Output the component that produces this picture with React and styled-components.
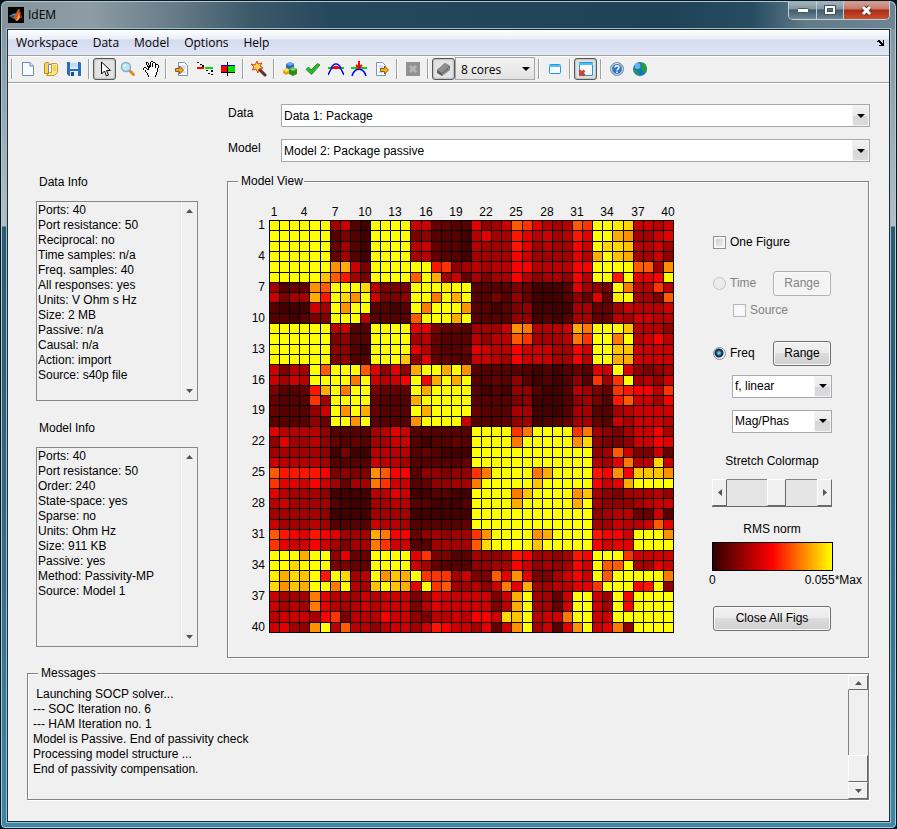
import React from "react";
import styled, { createGlobalStyle, css } from "styled-components";

const UI = '"Liberation Sans", Arial, sans-serif';
const MENU = '"Open Sans", "Noto Sans", sans-serif';

const GlobalStyle = createGlobalStyle`
  * { box-sizing: border-box; }
  body { margin: 0; background: #06131b; font: 12px/15px ${UI}; color: #000; }
  button, select, input { font: inherit; color: inherit; margin: 0; }
`;

/* ---------- window frame ---------- */

const Window = styled.div`
  min-height: 100vh;
  display: flex;
  flex-direction: column;
  border: 1px solid #0a1820;
  border-radius: 7px 7px 5px 5px;
  padding: 0 5px 5px;
  box-shadow: inset 0 0 0 1px #b4c8d2;
  background:
    linear-gradient(90deg, #84949d 0, #8d9ca5 90px, #637985 180px, #3c596a 250px, #26485d 330px, #1f4257 75%, #274d62 84%, #617b89 90%, #6d8594 100%) top / 100% 28px no-repeat,
    linear-gradient(180deg, #7d919d 0, #b3bfc7 225px, #2b5a74 226px, #2c6784 480px, #3c88a8 100%);
`;

const TitleBar = styled.header`
  display: flex;
  justify-content: space-between;
  height: 27px;
  padding: 0 1px 0 2px;
`;

const TitleText = styled.h1`
  display: flex;
  align-items: center;
  gap: 4px;
  margin: 0;
  padding-top: 1px;
  font: 12px/16px ${MENU};
`;

const WindowButtons = styled.div`
  display: flex;
  height: 19px;
  border: 1px solid #c3d0d7;
  border-top: 0;
  border-radius: 0 0 5px 5px;
  overflow: hidden;
`;

const WindowButton = styled.button`
  display: grid;
  place-items: center;
  width: ${(p) => (p.$close ? 46 : 27)}px;
  padding: 0;
  border: 0;
  border-left: ${(p) => (p.$first ? "0" : "1px solid #c3d0d7")};
  background: ${(p) =>
    p.$close
      ? "linear-gradient(#d19a8f 0 2px, #c6786b 8px, #ab2b16 9px, #c8502f)"
      : "linear-gradient(#9fb0ba 0 2px, #8094a0 8px, #3f5a69 9px, #6d8795)"};
`;

const Client = styled.div`
  flex: 1;
  display: flex;
  flex-direction: column;
  border: 1px solid #17303d;
  outline: 1px solid #a7bac4;
  margin: 1px;
  background: #f0f0f0;
`;

/* ---------- menu and toolbar ---------- */

const MenuBar = styled.nav`
  display: flex;
  align-items: center;
  height: 26px;
  padding: 0 4px 0 8px;
  border-bottom: 1px solid #a0a0a0;
  background: linear-gradient(#fff, #e9eef7 9px, #d4dbed 10px, #e0e6f6);
  font: 12px/16px ${MENU};
`;

const MenuItem = styled.button`
  padding: 0;
  margin-right: 15px;
  border: 0;
  background: none;
`;

const DockButton = styled.button`
  display: grid;
  padding: 0;
  margin-left: auto;
  border: 0;
  background: none;
`;

const Toolbar = styled.div`
  display: flex;
  align-items: center;
  height: 27px;
  padding-bottom: 2px;
  border-top: 1px solid #fff;
  border-bottom: 1px solid #a0a0a0;
  box-shadow: 0 1px #fff;
`;

const Separator = styled.span`
  width: 8px;
  height: 20px;
  background: linear-gradient(90deg, transparent 3px, #a0a0a0 3px 4px, #fff 4px 5px, transparent 5px);
`;

const ToolButton = styled.button`
  display: grid;
  place-items: center;
  width: 23px;
  height: 22px;
  padding: 0;
  border: 1px solid transparent;
  border-radius: 3px;
  background: none;
  ${(p) =>
    p.$pressed &&
    css`
      border-color: #575757;
      background: #e3e3e3;
      box-shadow: inset 0 0 2px #777;
    `}
`;

/* ---------- drop-downs ---------- */

const SelectFrame = styled.span`
  display: grid;
  grid-template-columns: 1fr 17px;
  align-items: stretch;
  width: ${(p) => p.$width || "auto"};
  height: 23px;
  border: 1px solid #a5a8b0;
  background: ${(p) => (p.$tool ? "linear-gradient(#f3f3f3, #e2e2e2)" : "#fff")};
  font-family: ${(p) => (p.$tool ? MENU : UI)};
`;

const SelectBox = styled.select`
  grid-area: 1 / 1 / 2 / 3;
  width: 100%;
  min-width: 0;
  padding: 1px 18px 0 ${(p) => (p.$tool ? 5 : 2)}px;
  border: 0;
  border-radius: 0;
  appearance: none;
  background: none;
`;

const SelectArrow = styled.span`
  grid-area: 1 / 2 / 2 / 3;
  display: grid;
  place-items: center;
  pointer-events: none;
  border: 1px solid ${(p) => (p.$tool ? "transparent" : "#f4f4f4")};
  background: ${(p) => (p.$tool ? "none" : "linear-gradient(#f1f1f1, #e9e9e9 50%, #d6d6d6 50%, #dcdcdc)")};
`;

function Select({ id, label, value, width, tool }) {
  return (
    <SelectFrame $width={width} $tool={tool}>
      <SelectBox id={id} aria-label={label} defaultValue={value} $tool={tool}>
        <option>{value}</option>
      </SelectBox>
      <SelectArrow $tool={tool}>
        <svg width="8" height="4" viewBox="0 0 8 4"><path d="M0 0h8L4 4z" /></svg>
      </SelectArrow>
    </SelectFrame>
  );
}

/* ---------- body ---------- */

const Body = styled.main`
  flex: 1;
  padding: 21px 19px 20px;
`;

const Columns = styled.div`
  display: grid;
  grid-template-columns: 162px 1fr;
  gap: 29px;
  margin-left: 9px;
`;

const Sidebar = styled.div`
  padding-top: 70px;
`;

const InfoSection = styled.section`
  margin-bottom: 19px;
`;

const InfoTitle = styled.h2`
  margin: 0 0 11px 3px;
  font: 12px/16px ${UI};
`;

const InfoBox = styled.div`
  display: flex;
  justify-content: space-between;
  height: 200px;
  border: 1px solid #828790;
`;

const InfoList = styled.ul`
  margin: 0;
  padding: 1px;
  list-style: none;
`;

const PlainScroll = styled.div`
  display: flex;
  flex-direction: column;
  justify-content: space-between;
  align-items: center;
  width: 16px;
  padding: 6px 0;
  border-left: 1px solid #fafafa;
  box-shadow: -1px 0 #e7e7e7;
`;

const MainColumn = styled.div`
  display: flex;
  flex-direction: column;
`;

const Field = styled.div`
  display: grid;
  grid-template-columns: 54px 1fr;
  margin-bottom: 12px;
`;

const FieldLabel = styled.label`
  padding-left: 1px;
  line-height: 18px;
`;

const Group = styled.fieldset`
  min-width: 0;
  margin: 0 1px 0 0;
  padding: 0;
  border: 1px solid #828282;
  box-shadow: 1px 1px #fff, inset 1px 1px #fff;
`;

const Legend = styled.legend`
  height: 15px;
  margin-left: 10px;
  padding: 0 1px 0 3px;
  line-height: 15px;
  background: #f0f0f0;
`;

const ModelView = styled.div`
  display: flex;
  justify-content: space-between;
  align-items: flex-start;
  height: 468px;
  padding: 16px 6px 0 17px;
`;

const Controls = styled.div`
  width: 150px;
  padding-top: 13px;
`;

const ControlRow = styled.div`
  display: flex;
  align-items: center;
  height: 26px;
  margin: ${(p) => p.$top || 0}px 0 0 ${(p) => p.$indent || 0}px;
`;

const Choice = styled.label`
  display: flex;
  align-items: center;
  gap: 4px;
  width: ${(p) => p.$width || "auto"};
  padding-left: 1px;
  color: ${(p) => (p.$off ? "#838383" : "#000")};
`;

const CheckInput = styled.input`
  appearance: none;
  width: 13px;
  height: 13px;
  border: 1px solid ${(p) => (p.disabled ? "#b8b8b8" : "#8e8f8f")};
  background: linear-gradient(135deg, #c3c7cb, #f6f6f6);
  box-shadow: inset 0 0 0 2px #f6f6f6;
  ${(p) => p.disabled && css`background: #f9f9f9;`}
`;

const RadioInput = styled.input`
  appearance: none;
  width: 13px;
  height: 13px;
  border: 1px solid ${(p) => (p.disabled ? "#c2c2c2" : "#8e8f8f")};
  border-radius: 50%;
  background: #ececec;
  &:checked {
    background: radial-gradient(circle at 5px 5px, #8fdcf8 0, #2f86b5 2px, #0d3350 3px, #0d3350 4px, #f4f4f4 5px);
  }
`;

const PushButton = styled.button`
  width: ${(p) => (p.$wide ? 118 : 58)}px;
  height: 25px;
  margin-left: ${(p) => (p.$wide ? 1 : 0)}px;
  padding: 0;
  border: 1px solid #707070;
  border-radius: 3px;
  background: linear-gradient(#f2f2f2, #ebebeb 48%, #dcdcdc 50%, #cfcfcf);
  box-shadow: inset 0 0 0 1px #f8f8f8;
  font-size: 12px;
  &:disabled {
    border-color: #adb2b5;
    background: #f4f4f4;
    color: #838383;
  }
`;

const Caption = styled.div`
  width: 120px;
  margin-top: ${(p) => p.$top}px;
  line-height: 16px;
  text-align: center;
  white-space: nowrap;
`;

const Slider = styled.div`
  display: grid;
  grid-template-columns: 15px 40px 19px 1fr 15px;
  width: 120px;
  height: 28px;
  margin-top: 10px;
  border-bottom: 1px solid #696969;
`;

const SliderTrack = styled.span`
  border-top: 1px solid #828282;
  background: #e5e5e5;
`;

const RaisedButton = styled.button`
  display: grid;
  place-items: center;
  min-width: 0;
  padding: 0;
  border: 1px solid;
  border-color: #fff #696969 #696969 #fff;
  background: #f0f0f0;
`;

const ColorBar = styled.div`
  width: 121px;
  height: 29px;
  margin-top: 5px;
  border: 1px solid #000;
  background: linear-gradient(90deg, #300000, #ff0000 50%, #ffff00);
`;

const BarLabels = styled.div`
  display: flex;
  justify-content: space-between;
  margin: 2px 0 18px -3px;
  line-height: 15px;
`;

const Messages = styled.div`
  display: flex;
  justify-content: space-between;
  height: 118px;
`;

const Log = styled.div`
  padding: 6px 5px;
  white-space: pre;
`;

const MessageScroll = styled.div`
  display: grid;
  grid-template-rows: 15px 1fr 27px 17px;
  width: 20px;
  margin-top: -6px;
`;

const MessageTrack = styled.span`
  border-left: 1px solid #828282;
`;

/* ---------- heat map ---------- */

const PALETTE = {
  0: "#440000", 1: "#560000", 2: "#660000", 3: "#7b0000", 4: "#900000",
  5: "#a40000", 6: "#b80000", 7: "#cc0000", 8: "#e40000", 9: "#fb0000",
  a: "#ff1400", b: "#ff3300", c: "#ff5a00", d: "#ff7800", e: "#ff9000",
  f: "#ffac00", g: "#ffc400", h: "#ffd800", i: "#ffee00", y: "#ffff00",
};

const ROWS = [
  "yyyyyy5710yyyy7722118457cb8656cbyyih7767",
  "yyyyyy1310yyyy3411106855a86756a8yyfe5578",
  "yyyyyy2510yyyy6721106555a8565597yhhg6675",
  "yyyyyy2510yyyy562110555597555586fygf5574",
  "yyyyyyef73yyyyyyab45656699666699yyyycc5e",
  "yyyyygca53yyyycyf572535596455496yyay889y",
  "5122ecyyyh6333yyyiyy11113200018543yd66b6",
  "7355fayhey7334yydyfy11314200014282iy553c",
  "100075yeyy1101ydyyye11013400005522576667",
  "110133yyy61111cyyyfy11114401015522657766",
  "yyyyyy6711yyyy8832215557ed6667fdyyyg6664",
  "yyyyyy3411yyyy5621116466cb5556dbyydy6796",
  "yyyyyy4410yyyy862112876697775597yygg7777",
  "yyyyyy3411yyyg482211776597775596yyff7777",
  "7365ycyyyc8484fyyfye11111101012187y84345",
  "7576yyyydy7679y9fyfy112141010141b5by5647",
  "3112afydyy3222yfyyyy10104410016532ba996b",
  "2111b5yyyy2111fyyyyy11113400014531ac7759",
  "211147yeyf2111yfyyyy21115500015511567777",
  "111142yyey1111eyyyy711124501125521757776",
  "86666411115687111111yyyybdyyyybd54357795",
  "48556421215577101121yyyydyyyyyeh43347798",
  "55555403006666121000yyyyyyyyyyyy45c73372",
  "76666511117665111112yyyyyyyyyyyy658d66h7",
  "caaaa93433ec99144344bdyyyydfyyyya9e9ggge",
  "b887975255db77124455dyyyyygyyyyy978fyyyy",
  "86555400006687001100yyyydgyyyyeg54355564",
  "67555510005566110001yyyyfyyyyyfy54445677",
  "55555400005555000000yyyyyyyyyyyy45662271",
  "75556511117665111112yyyyyyyyyyyy557667c8",
  "ca98a98555fd99245455beyyyyefyyyya997yyye",
  "b877975355db77115555chyyyygyyyyy9788yyyy",
  "yyyfyy4822yyyy8b33115445a95545a9yyyb7777",
  "yyhyyy3322yyyy752111445597454597yccy5587",
  "ifhgyayh56yegfybbb5733c8e8335797ycyyyyyd",
  "hegfyydy65gygf8ybc55647d8f556688byyy9ay4",
  "7555d8665767773587777737fy5527yy75y9yyyy",
  "7565d8656767773687777736fy5527yy75y9yyyy",
  "677759b3666977436676997hgy677dyy77yyyyyy",
  "7854ey6c66467757a9775827ey5718ey78d4yyyy",
];

const TICKS = Array.from({ length: 14 }, (_, i) => 1 + 3 * i);
const colX = (i) => 24 + Math.round(i * 10.1);
const rowY = (i) => 15 + Math.round(i * 10.3);

function HeatMap() {
  return (
    <svg width="435" height="430" viewBox="0 0 435 430" role="img" aria-label="Model View">
      <rect x="24" y="15" width="405" height="413" />
      <g shapeRendering="crispEdges">
        {ROWS.map((row, r) =>
          [...row].map((level, c) => (
            <rect
              key={`${r}-${c}`}
              x={colX(c) + 1}
              y={rowY(r) + 1}
              width={colX(c + 1) - colX(c) - 1}
              height={rowY(r + 1) - rowY(r) - 1}
              fill={PALETTE[level]}
            />
          ))
        )}
      </g>
      <g fontFamily={UI} fontSize="12">
        {TICKS.map((t) => (
          <text key={`x${t}`} x={colX(t - 1) + 5} y="11" textAnchor="middle">{t}</text>
        ))}
        {TICKS.map((t) => (
          <text key={`y${t}`} x="20" y={rowY(t - 1) + 9} textAnchor="end">{t}</text>
        ))}
      </g>
    </svg>
  );
}

/* ---------- icons ---------- */

const Icon = ({ children, crisp }) => (
  <svg width="16" height="16" viewBox="0 0 16 16" fill="none" shapeRendering={crisp ? "crispEdges" : undefined}>
    {children}
  </svg>
);

const MatlabLogo = () => (
  <svg width="16" height="16" viewBox="0 0 16 16">
    <path fill="#000" d="M0 0h16v16H0z" />
    <path fill="#4a9ac8" d="M1 9l4-2 2-1 2 2-3 4z" />
    <path fill="#1f5573" d="M1 9l3 2 2 0 2-3z" />
    <path fill="#d9541e" d="M5 11c3-2 4-9 6-9 1 1 2 7 4 10-2-2-3-1-4 0-1 1-2 2-3 2-1-1-1-3-3-3z" />
    <path fill="#f6b04a" d="M11 2c0 4 0 7-3 12 2 0 3-2 4-4 0-3 0-6-1-8z" />
    <path fill="#8c1d0e" d="M11 2c1 1 2 7 4 10-2-2-2-1-3-1z" />
  </svg>
);

const NewIcon = () => (
  <Icon><path d="M2.500 1.500h7.500l3.500 3.500v9.500h-11z" fill="#f8fbff" stroke="#7089b5" /><path d="M10 1.500V5h3.500" fill="#dbe6f5" stroke="#7089b5" /></Icon>
);
const OpenIcon = () => (
  <Icon>
    <path d="M1.500 2.500l1-1h3l1 1v10h-5z" fill="#f6d55c" stroke="#b98e18" />
    <path d="M5.500 3.500h5l2 2v8h-7z" fill="#fff" stroke="#7089b5" />
    <path d="M8.500 2.500h5l1 1v8l-3 3h-8l3-3h2z" fill="#fce887" stroke="#c49a22" />
    <path d="M10 5h3M10 7h3M10 9h3" stroke="#e7c03f" />
  </Icon>
);
const SaveIcon = () => (
  <Icon>
    <path d="M1 1h13l1 1v13H3l-2-2z" fill="#2c6cc0" /><path d="M4 1h8v7H4z" fill="#d8ecfc" />
    <path d="M4 3h8M4 5h8" stroke="#a8cbe8" />
    <path d="M4 10h8v5H4z" fill="#e8eef4" /><path d="M5 11h3v4H5z" fill="#174f96" />
  </Icon>
);
const CursorIcon = () => (
  <Icon><path d="M4.500 1v12l3-3 2 5 2-1-2-4.500h4z" fill="#fff" stroke="#000" /></Icon>
);
const ZoomIcon = () => (
  <Icon>
    <path d="M9 9l4.500 4.500" stroke="#d88a2c" strokeWidth="3" strokeLinecap="round" />
    <circle cx="6" cy="6" r="4.500" fill="#bfe4fa" stroke="#7fb0d4" strokeWidth="1.500" />
    <path d="M4 6c0-1 1-2 2-2" stroke="#fff" strokeWidth="1.500" />
  </Icon>
);
const HandIcon = () => (
  <Icon crisp>
    <path d="M5 15v-2L1 9V7h2l2 2V7L3 4V2h2l2 4V1h2v5l1-5h2v6l2-3h1v2l-1 4-2 3v2z" fill="#fff" />
    <path d="M5 14h1v2H5zM12 14h1v2h-1zM4 12h1v2H4zM3 11h1v1H3zM2 9h1v2H2zM0 7h1v2H0zM1 6h2v1H1zM3 7h1v1H3zM4 8h1v1H4zM5 5h1v4H5zM4 4h1v2H4zM3 2h1v2H3zM3 1h2v1H3zM5 2h1v2H5zM6 4h1v3H6zM7 1h1v5H7zM8 0h2v1H8zM9 2h1v4H9zM10 1h2v1h-2zM12 2h1v4h-1zM13 3h2v1h-2zM15 4h1v3h-1zM14 7h1v4h-1zM13 11h1v3h-1zM12 5h1v2h-1z" fill="#000" />
  </Icon>
);
const PageShape = ({ x }) => (
  <>
    <path d={`M${x} 1.500h6l3 3v10h-9z`} fill="#fff" stroke="#7b93bd" />
    <path d={`M${x + 2} 5h5M${x + 2} 7h5M${x + 2} 11h5`} stroke="#a9bddc" />
  </>
);
const ImportIcon = () => (
  <Icon><PageShape x={4.5} /><path d="M1.500 7.500h4V5l4 4-4 4v-2.500h-4z" fill="#efa51f" stroke="#8d5e10" /></Icon>
);
const ExportIcon = () => (
  <Icon><PageShape x={2.5} /><path d="M6.500 7.500h4V5l4 4-4 4v-2.500h-4z" fill="#f2b51f" stroke="#8d5e10" /></Icon>
);
const SamplesIcon = () => (
  <Icon crisp>
    <path d="M0 6h7v2H0z" fill="#f00" /><path d="M8 6h8v2H8z" fill="#00e000" />
    <path d="M0 1h2v1H0zM3 3h2v1H3zM5 4h2v2H5zM9 9h2v1H9zM11 12h2v1h-2zM14 9h2v2h-2zM14 13h2v1h-2z" fill="#000" />
  </Icon>
);
const BlocksIcon = () => (
  <Icon crisp>
    <path d="M1 5h6v6H1z" fill="#f00" /><path d="M8 5h7v6H8z" fill="#00e000" />
    <path d="M1 4h14v1H1z" fill="#00f" /><path d="M1 11h14v1H1zM7 1h1v14H7z" fill="#000" />
  </Icon>
);
const WandIcon = () => (
  <Icon>
    <path d="M7 7l7 7" stroke="#57312a" strokeWidth="3" strokeLinecap="round" />
    <path d="M6 0l1 3 4-1-2 3 3 2-4 1-1 4-2-4-4 1 2-3-3-3 4 1z" fill="#ffd54a" stroke="#d5451e" />
  </Icon>
);
const CubesIcon = () => (
  <Icon>
    <path d="M4 3l4-2 4 2v4L8 9 4 7z" fill="#2467c9" /><path d="M4 3l4-2 4 2-4 2z" fill="#6ea7ef" />
    <path d="M1 9l3-2 4 2v3l-4 2-3-2z" fill="#e0a315" /><path d="M1 9l3-2 4 2-4 2z" fill="#ffe05c" />
    <path d="M7 8l4-2 4 2v5l-4 2-4-2z" fill="#2f8a1c" /><path d="M7 8l4-2 4 2-4 2z" fill="#7fd258" />
  </Icon>
);
const CheckIcon = () => (
  <Icon><path d="M1 8.500L3.500 6 6 9l6.500-6.500L15 4 6.500 13.500z" fill="#2fb52f" stroke="#239523" strokeLinejoin="round" /></Icon>
);
const ArchIcon = ({ arrow }) => (
  <Icon>
    <path d="M0 7h16" stroke="#00e000" strokeWidth="2" />
    {arrow ? (
      <>
        <path d="M1 15c1-3 2-5 4-6l3-1 3 1c2 1 3 3 4 6" stroke="#00f" strokeWidth="1.500" />
        <path d="M8 0v8M5 4l3 3 3-3" stroke="#f00" strokeWidth="2" />
      </>
    ) : (
      <>
        <path d="M4 7l2-2h4l2 2v1H4z" fill="#f00" />
        <path d="M0 14c1-2 2-4 3-6 1-3 3-5 5-5s4 2 5 5c1 2 2 4 3 6" stroke="#00f" strokeWidth="1.500" />
      </>
    )}
  </Icon>
);
const StopIcon = () => (
  <Icon><path d="M1 1h14v14H1z" fill="#929292" /><path d="M5 5l6 6M11 5l-6 6" stroke="#b5b5b5" strokeWidth="3" /></Icon>
);
const ChipIcon = () => (
  <Icon>
    <path d="M1 9l8-7 5 3v4l-8 6-5-3z" fill="#606060" /><path d="M1 9l8-7 5 3-8 7z" fill="#8f8f8f" />
    <path d="M7 12v2M9 10.500v3M11 9v3M13 7v3" stroke="#bbb" />
  </Icon>
);
const FigureIcon = () => (
  <Icon><rect x="2.500" y="3.500" width="11" height="9" rx="1" fill="#f5fbff" stroke="#199ae6" /><path d="M2 5h12" stroke="#58b9f2" strokeWidth="2" /></Icon>
);
const CloseFigureIcon = () => (
  <Icon>
    <path d="M1.500 1.500h13v13h-13z" fill="#f5fbff" stroke="#199ae6" /><path d="M1 3h14" stroke="#58b9f2" strokeWidth="2" />
    <path d="M1.500 9.500l5 5M6.500 9.500l-5 5" stroke="#d83b22" strokeWidth="2.500" />
  </Icon>
);
const HelpIcon = () => (
  <Icon>
    <circle cx="8" cy="8" r="6.500" fill="#3b74bd" stroke="#8693a6" />
    <circle cx="8" cy="8" r="5.500" stroke="#dbe8f7" />
    <path d="M6 6.500C6 4 10 4 10 6.500 10 8 8 8 8 9.500M8 10.500V12" stroke="#fff" strokeWidth="1.500" />
  </Icon>
);
const GlobeIcon = () => (
  <Icon>
    <circle cx="8" cy="8" r="7" fill="#1478c8" />
    <path d="M9 2l3 0c3 3 3 5 2 8l-2 3-1-3-2-3 1-2zM2 8l4 2 1 3-1 1c-2-1-4-3-4-6z" fill="#29a02c" />
    <circle cx="5.500" cy="5" r="3" fill="#9fdcff" fillOpacity=".6" />
  </Icon>
);

const Triangle = ({ dir }) => {
  const paths = { up: "M0 5h7L3.500 1z", down: "M0 1h7L3.500 5z", left: "M5 0v7L1 3.500z", right: "M1 0v7l4-3.500z" };
  const flat = dir === "up" || dir === "down";
  return (
    <svg width={flat ? 7 : 6} height={flat ? 6 : 7} fill="#555">
      <path d={paths[dir]} />
    </svg>
  );
};

/* ---------- page ---------- */

const TOOL_GROUPS = [
  [["New", NewIcon], ["Open", OpenIcon], ["Save", SaveIcon]],
  [["Select", CursorIcon, true], ["Zoom", ZoomIcon], ["Pan", HandIcon]],
  [["Import", ImportIcon], ["Samples", SamplesIcon], ["Blocks", BlocksIcon]],
  [["Wizard", WandIcon]],
  [["Model", CubesIcon], ["Check", CheckIcon], ["Passivity", ArchIcon], ["Enforce", () => <ArchIcon arrow />], ["Export", ExportIcon]],
  [["Stop", StopIcon]],
];

const Tool = ({ name, glyph: Glyph, pressed }) => (
  <ToolButton type="button" aria-label={name} aria-pressed={pressed} $pressed={pressed}>
    <Glyph />
  </ToolButton>
);

const DATA_INFO = [
  "Ports: 40", "Port resistance: 50", "Reciprocal: no", "Time samples: n/a", "Freq. samples: 40",
  "All responses: yes", "Units: V Ohm s Hz", "Size: 2 MB", "Passive: n/a", "Causal: n/a",
  "Action: import", "Source: s40p file",
];
const MODEL_INFO = [
  "Ports: 40", "Port resistance: 50", "Order: 240", "State-space: yes", "Sparse: no",
  "Units: Ohm Hz", "Size: 911 KB", "Passive: yes", "Method: Passivity-MP", "Source: Model 1",
];
const MESSAGES = [
  " Launching SOCP solver...", "--- SOC Iteration no. 6", "--- HAM Iteration no. 1",
  "Model is Passive. End of passivity check", "Processing model structure ...", "End of passivity compensation.",
];

function Info({ title, lines }) {
  return (
    <InfoSection>
      <InfoTitle>{title}</InfoTitle>
      <InfoBox>
        <InfoList>{lines.map((line) => <li key={line}>{line}</li>)}</InfoList>
        <PlainScroll><Triangle dir="up" /><Triangle dir="down" /></PlainScroll>
      </InfoBox>
    </InfoSection>
  );
}

export default function App() {
  return (
    <Window>
      <GlobalStyle />
      <TitleBar>
        <TitleText><MatlabLogo />IdEM</TitleText>
        <WindowButtons>
          <WindowButton aria-label="Minimize" $first>
            <svg width="12" height="5"><rect x=".5" y=".5" width="11" height="4" rx="1" fill="#fff" stroke="#46545e" /></svg>
          </WindowButton>
          <WindowButton aria-label="Maximize">
            <svg width="12" height="10" fill="none"><rect x="2" y="2" width="8" height="6" stroke="#46545e" strokeWidth="4" /><rect x="2" y="2" width="8" height="6" stroke="#fff" strokeWidth="2" /></svg>
          </WindowButton>
          <WindowButton aria-label="Close" $close>
            <svg width="13" height="11" fill="none"><path d="M3 2l7 7M10 2L3 9" stroke="#5b3a3a" strokeWidth="5" /><path d="M3 2l7 7M10 2L3 9" stroke="#fff" strokeWidth="3" /></svg>
          </WindowButton>
        </WindowButtons>
      </TitleBar>
      <Client>
        <MenuBar>
          {["Workspace", "Data", "Model", "Options", "Help"].map((m) => <MenuItem key={m} type="button">{m}</MenuItem>)}
          <DockButton aria-label="Dock">
            <svg width="8" height="6" shapeRendering="crispEdges"><path d="M0 1h1v1H0zM1 0h2v1h1v1h1v1h1V0h1v6H2V5h2V4H3V3H2V2H1z" /></svg>
          </DockButton>
        </MenuBar>
        <Toolbar>
          {TOOL_GROUPS.map((group, i) => (
            <React.Fragment key={i}>
              <Separator />
              {group.map(([name, glyph, pressed]) => <Tool key={name} name={name} glyph={glyph} pressed={pressed} />)}
            </React.Fragment>
          ))}
          <Separator />
          <Tool name="Parallel" glyph={ChipIcon} pressed />
          <Select label="Cores" value="8 cores" width="80px" tool />
          <Separator />
          <Tool name="Figure" glyph={FigureIcon} />
          <Separator />
          <Tool name="Close figures" glyph={CloseFigureIcon} pressed />
          <Separator />
          <Tool name="Help" glyph={HelpIcon} />
          <Tool name="Web" glyph={GlobeIcon} />
        </Toolbar>
        <Body>
          <Columns>
            <Sidebar>
              <Info title="Data Info" lines={DATA_INFO} />
              <Info title="Model Info" lines={MODEL_INFO} />
            </Sidebar>
            <MainColumn>
              <Field>
                <FieldLabel htmlFor="data">Data</FieldLabel>
                <Select id="data" value="Data 1: Package" />
              </Field>
              <Field>
                <FieldLabel htmlFor="model">Model</FieldLabel>
                <Select id="model" value="Model 2: Package passive" />
              </Field>
              <Group>
                <Legend>Model View</Legend>
                <ModelView>
                  <HeatMap />
                  <Controls>
                    <ControlRow $top={11}>
                      <Choice><CheckInput type="checkbox" />One Figure</Choice>
                    </ControlRow>
                    <ControlRow $top={15}>
                      <Choice $off $width="61px"><RadioInput type="radio" name="domain" disabled />Time</Choice>
                      <PushButton type="button" disabled>Range</PushButton>
                    </ControlRow>
                    <ControlRow $top={1} $indent={20}>
                      <Choice $off><CheckInput type="checkbox" disabled />Source</Choice>
                    </ControlRow>
                    <ControlRow $top={17}>
                      <Choice $width="61px"><RadioInput type="radio" name="domain" defaultChecked />Freq</Choice>
                      <PushButton type="button">Range</PushButton>
                    </ControlRow>
                    <ControlRow $top={7} $indent={20}><Select label="Frequency axis" value="f, linear" width="100px" /></ControlRow>
                    <ControlRow $top={9} $indent={20}><Select label="Plot type" value="Mag/Phas" width="100px" /></ControlRow>
                    <Caption $top={19}>Stretch Colormap</Caption>
                    <Slider>
                      <RaisedButton aria-label="Decrease"><Triangle dir="left" /></RaisedButton>
                      <SliderTrack />
                      <RaisedButton aria-label="Colormap stretch" />
                      <SliderTrack />
                      <RaisedButton aria-label="Increase"><Triangle dir="right" /></RaisedButton>
                    </Slider>
                    <Caption $top={14}>RMS norm</Caption>
                    <ColorBar />
                    <BarLabels><span>0</span><span>0.055*Max</span></BarLabels>
                    <PushButton type="button" $wide>Close All Figs</PushButton>
                  </Controls>
                </ModelView>
              </Group>
            </MainColumn>
          </Columns>
          <Group>
            <Legend>Messages</Legend>
            <Messages>
              <Log role="log">{MESSAGES.map((m) => <div key={m}>{m}</div>)}</Log>
              <MessageScroll>
                <RaisedButton aria-label="Scroll up"><Triangle dir="up" /></RaisedButton>
                <MessageTrack />
                <RaisedButton aria-label="Scroll position" />
                <RaisedButton aria-label="Scroll down"><Triangle dir="down" /></RaisedButton>
              </MessageScroll>
            </Messages>
          </Group>
        </Body>
      </Client>
    </Window>
  );
}
